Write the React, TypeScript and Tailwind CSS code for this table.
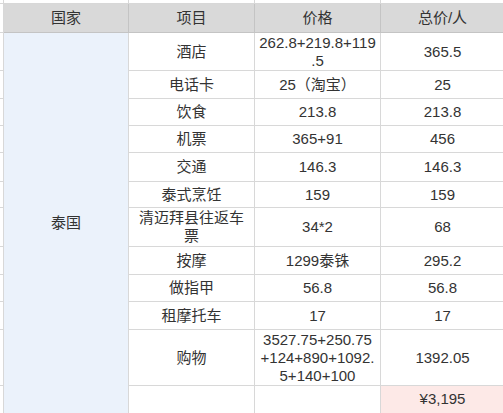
import React from "react";

type Row = { item: string; price: string[]; total: string };

const ROWS: Row[] = [
  { item: "酒店", price: ["262.8+219.8+119", ".5"], total: "365.5" },
  { item: "电话卡", price: ["25（淘宝）"], total: "25" },
  { item: "饮食", price: ["213.8"], total: "213.8" },
  { item: "机票", price: ["365+91"], total: "456" },
  { item: "交通", price: ["146.3"], total: "146.3" },
  { item: "泰式烹饪", price: ["159"], total: "159" },
  { item: "清迈拜县往返车票", price: ["34*2"], total: "68" },
  { item: "按摩", price: ["1299泰铢"], total: "295.2" },
  { item: "做指甲", price: ["56.8"], total: "56.8" },
  { item: "租摩托车", price: ["17"], total: "17" },
  { item: "购物", price: ["3527.75+250.75", "+124+890+1092.", "5+140+100"], total: "1392.05" },
];

const cell =
  "flex flex-col items-center justify-center text-center border-r border-b border-[#d8d8d8] px-[2px] leading-[18px] break-all";
const itemCell =
  "flex items-center justify-center text-center border-r border-b border-[#d8d8d8] px-[4px] leading-[18px] break-all";
const head =
  "flex items-center justify-center text-center border-r border-b border-[#c4c4c4] bg-[#d9d9d9]";

export default function App() {
  return (
    <div className="h-[413px] w-[503px] overflow-hidden bg-white font-['Liberation_Sans','Noto_Sans_CJK_SC',sans-serif] text-[15px] text-[#333]">
      <div className="grid w-[505px] grid-cols-[4px_125px_126px_126px_124px] grid-rows-[4px_29px_38px_28px_27px_27px_29px_26px_39px_28px_27px_28px_56px_28px]">
        {/* top strip of the sheet */}
        <div className="border-r border-b border-[#d8d8d8]" />
        <div className="border-r border-b border-[#d8d8d8]" />
        <div className="border-r border-b border-[#d8d8d8]" />
        <div className="border-r border-b border-[#d8d8d8]" />
        <div className="border-r border-b border-[#d8d8d8]" />

        {/* header */}
        <div className="border-r border-b border-[#d8d8d8]" />
        <div className={head}>国家</div>
        <div className={head}>项目</div>
        <div className={head}>价格</div>
        <div className={head}>总价/人</div>

        <div className="col-start-2 row-start-3 row-span-12 flex items-center justify-center border-r border-b border-[#d8d8d8] bg-[#ebf2fb]">
          泰国
        </div>

        {ROWS.map((r) => (
          <React.Fragment key={r.item}>
            <div className="col-start-1 border-r border-b border-[#d8d8d8]" />
            <div className={`col-start-3 ${itemCell}`}>{r.item}</div>
            <div className={cell}>
              {r.price.map((line) => (
                <span key={line} className="whitespace-nowrap">
                  {line}
                </span>
              ))}
            </div>
            <div className={cell}>{r.total}</div>
          </React.Fragment>
        ))}

        {/* sum row */}
        <div className="col-start-1 border-r border-b border-[#d8d8d8]" />
        <div className={`col-start-3 ${cell}`} />
        <div className={cell} />
        <div className="flex items-center justify-center border-r border-b border-[#d8d8d8] bg-[#fde9e7]">
          ¥3,195
        </div>
      </div>
    </div>
  );
}
